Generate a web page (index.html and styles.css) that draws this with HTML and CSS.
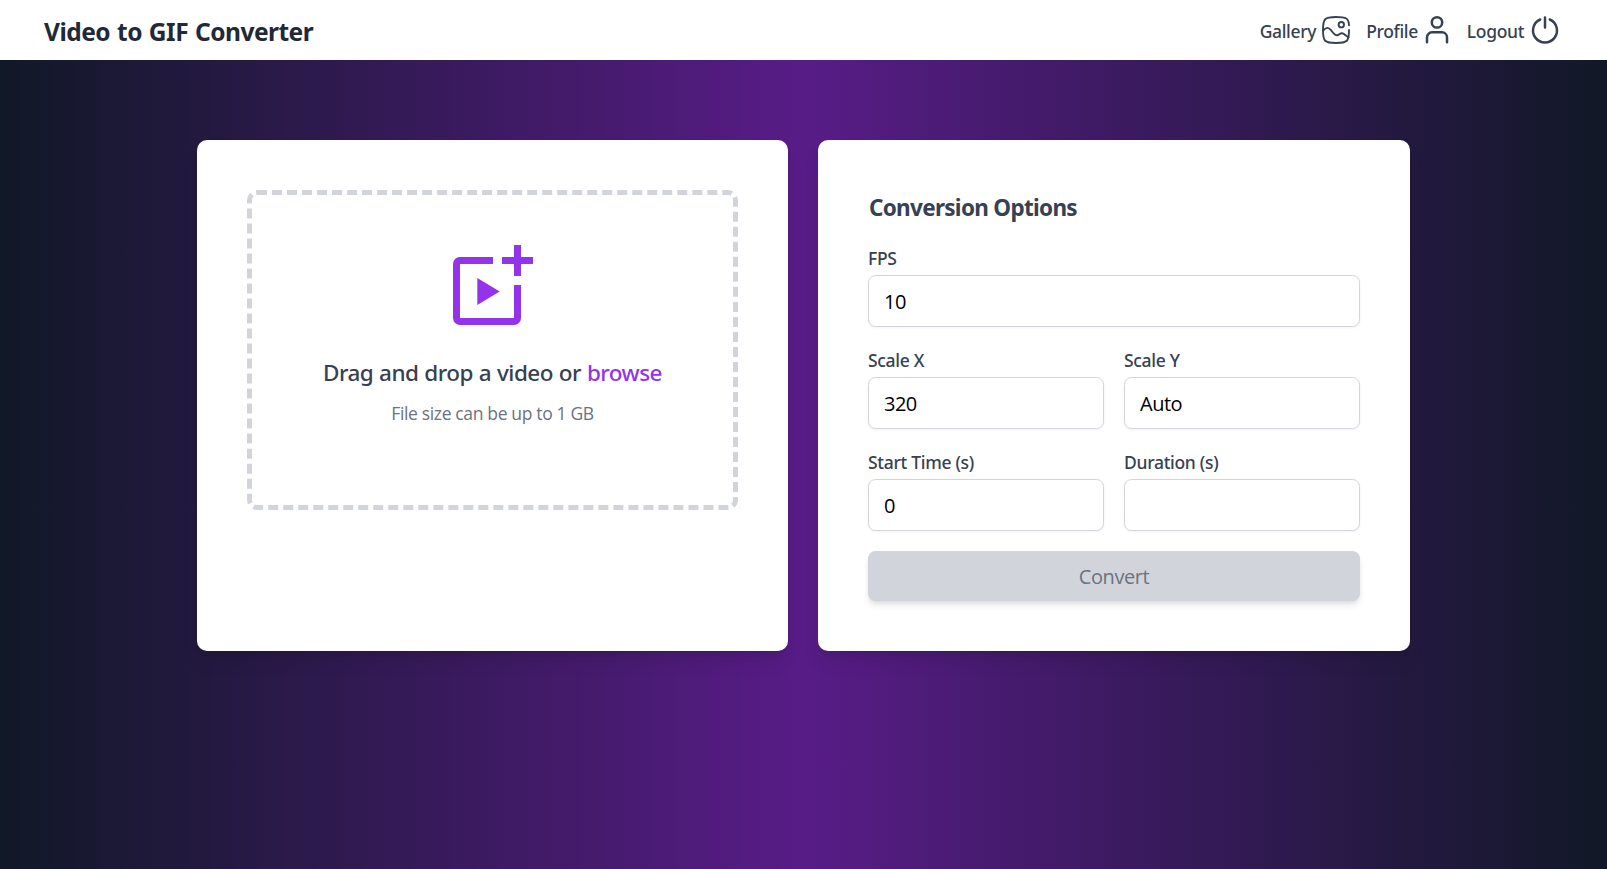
FILE: index.html
```html
<!DOCTYPE html>
<html lang="en">
<head>
<meta charset="utf-8">
<title>Video to GIF Converter</title>
<link rel="stylesheet" href="styles.css">
</head>
<body>
<header class="navbar">
  <h1 class="brand">Video to GIF Converter</h1>
  <nav class="nav">
    <a class="nav-link gallery"><span class="nav-text">Gallery</span>
      <svg class="nav-icon" viewBox="0 0 30 30" fill="none" stroke="currentColor" stroke-width="1.900" stroke-linecap="round" stroke-linejoin="round">
        <path d="M28 10.2C27.6 3.4 25.4 2 15 2C3.600 2 2 3.600 2 15C2 26.400 3.600 28 15 28C26.400 28 28 26.400 28 15"/>
        <circle cx="20.300" cy="9.700" r="2.700"/>
        <path d="M2.300 15.500C5.300 12.100 7.400 12.100 10 15.200C12.400 18.200 13.600 20.300 16 20.300C18.200 20.300 18.800 18 21.200 18.300C23.600 18.600 24.600 20.800 27.600 22.400"/>
      </svg>
    </a>
    <a class="nav-link profile"><span class="nav-text">Profile</span>
      <svg class="nav-icon" viewBox="0 0 30 30" fill="none" stroke="currentColor" stroke-width="2.500" stroke-linecap="round" stroke-linejoin="round">
        <circle cx="15" cy="7.400" r="5.200"/>
        <path d="M5 27.300V22.300A5 5 0 0 1 10 17.300H20A5 5 0 0 1 25 22.300V27.300"/>
      </svg>
    </a>
    <a class="nav-link logout"><span class="nav-text">Logout</span>
      <svg class="nav-icon" viewBox="0 0 30 30" fill="none" stroke="currentColor" stroke-width="2.500" stroke-linecap="round">
        <path d="M15 2.500V12.500M10.200 4.500A12 12 0 1 0 19.800 4.500"/>
      </svg>
    </a>
  </nav>
</header>
<main class="content">
  <section class="card">
    <div class="dropzone">
      <svg class="video-icon" viewBox="0 0 80 80" fill="currentColor">
        <path d="M40 12H7a7 7 0 0 0-7 7V73a7 7 0 0 0 7 7H61a7 7 0 0 0 7-7V40H61V73H7V19H40Z"/>
        <path d="M61 0H68V12H80V19H68V31H61V19H49V12H61Z"/>
        <path d="M24.300 33V60L46.700 46.500Z"/>
      </svg>
      <p class="drop-title">Drag and drop a video or <span class="browse">browse</span></p>
      <p class="drop-note">File size can be up to 1 GB</p>
    </div>
  </section>
  <section class="card">
    <h2 class="options-title">Conversion Options</h2>
    <form class="options">
      <div class="field wide"><label class="label" for="fps">FPS</label><input class="input" id="fps" value="10"></div>
      <div class="field"><label class="label" for="sx">Scale X</label><input class="input" id="sx" value="320"></div>
      <div class="field"><label class="label" for="sy">Scale Y</label><input class="input" id="sy" value="Auto"></div>
      <div class="field"><label class="label" for="start">Start Time (s)</label><input class="input" id="start" value="0"></div>
      <div class="field"><label class="label" for="dur">Duration (s)</label><input class="input" id="dur"></div>
      <button class="convert" type="button" disabled>Convert</button>
    </form>
  </section>
</main>
</body>
</html>
```
FILE: styles.css
```css
* { box-sizing: border-box; margin: 0; padding: 0; }
body {
  min-height: 100vh;
  font-family: "Noto Sans", "Open Sans", sans-serif;
  font-size: 20px;
  line-height: 30px;
  color: #374151;
  background: linear-gradient(to right, #111827, #581c87, #111827);
}
.navbar {
  display: flex;
  justify-content: space-between;
  align-items: center;
  height: 60px;
  padding: 0 47px 0 44px;
  background: #fff;
}
.brand {
  padding-top: 2px;
  font-size: 24.5px;
  font-weight: 700;
  line-height: 35px;
  letter-spacing: -0.5px;
  word-spacing: 1px;
  color: #1f2937;
}
.nav { display: flex; gap: 15px; font-size: 17.5px; font-weight: 500; }
.nav-link { display: flex; gap: 5px; align-items: center; }
.nav-text { padding-top: 2px; letter-spacing: -0.35px; }
.nav-icon { width: 30px; height: 30px; }
.profile { gap: 4px; }
.logout { gap: 6px; }
.content {
  display: grid;
  grid-template-columns: 591px 592px;
  gap: 30px;
  width: 1213px;
  margin: 80px auto 0;
}
.card {
  height: 511px;
  padding: 50px;
  background: #fff;
  border-radius: 10px;
  box-shadow: 0 12.5px 18.75px -3.75px rgba(0, 0, 0, .1), 0 5px 7.5px -5px rgba(0, 0, 0, .1);
}
.dropzone {
  display: flex;
  flex-direction: column;
  align-items: center;
  height: 320px;
  padding-top: 50px;
  border: 5px dashed #d1d5db;
  border-radius: 10px;
}
.video-icon { width: 80px; height: 80px; color: #9333ea; }
.drop-title {
  margin-top: 30px;
  font-size: 22.5px;
  font-weight: 500;
  line-height: 35px;
  letter-spacing: -0.54px;
  word-spacing: 0.6px;
}
.browse { color: #9333ea; }
.drop-note {
  margin-top: 11px;
  font-family: "Open Sans", "Noto Sans", sans-serif;
  font-size: 17.5px;
  line-height: 25px;
  letter-spacing: -0.35px;
  color: #6b7280;
}
.options-title {
  margin-bottom: 20px;
  padding-left: 1px;
  font-size: 22.5px;
  font-weight: 700;
  line-height: 35px;
  letter-spacing: -0.7px;
}
.options { display: grid; grid-template-columns: 1fr 1fr; gap: 20px; }
.wide, .convert { grid-column: 1 / -1; }
.label { display: block; height: 30px; font-size: 17.5px; font-weight: 500; line-height: 26px; letter-spacing: -0.3px; }
.input {
  display: block;
  width: 100%;
  height: 52px;
  padding: 0 15px;
  font: inherit;
  font-family: "Open Sans", "Noto Sans", sans-serif;
  letter-spacing: -0.5px;
  color: #000;
  background: #fff;
  border: 1px solid #d1d5db;
  border-radius: 7.5px;
  box-shadow: 0 1px 2.5px rgba(0, 0, 0, .05);
}
.convert {
  height: 50px;
  padding-top: 2px;
  font: inherit;
  font-family: "Open Sans", "Noto Sans", sans-serif;
  letter-spacing: -0.4px;
  color: #6b7280;
  background: #d1d5db;
  border: 0;
  border-radius: 7.5px;
  box-shadow: 0 5px 7.5px -1.25px rgba(0, 0, 0, .1), 0 2.5px 5px -2.5px rgba(0, 0, 0, .1);
}
```
